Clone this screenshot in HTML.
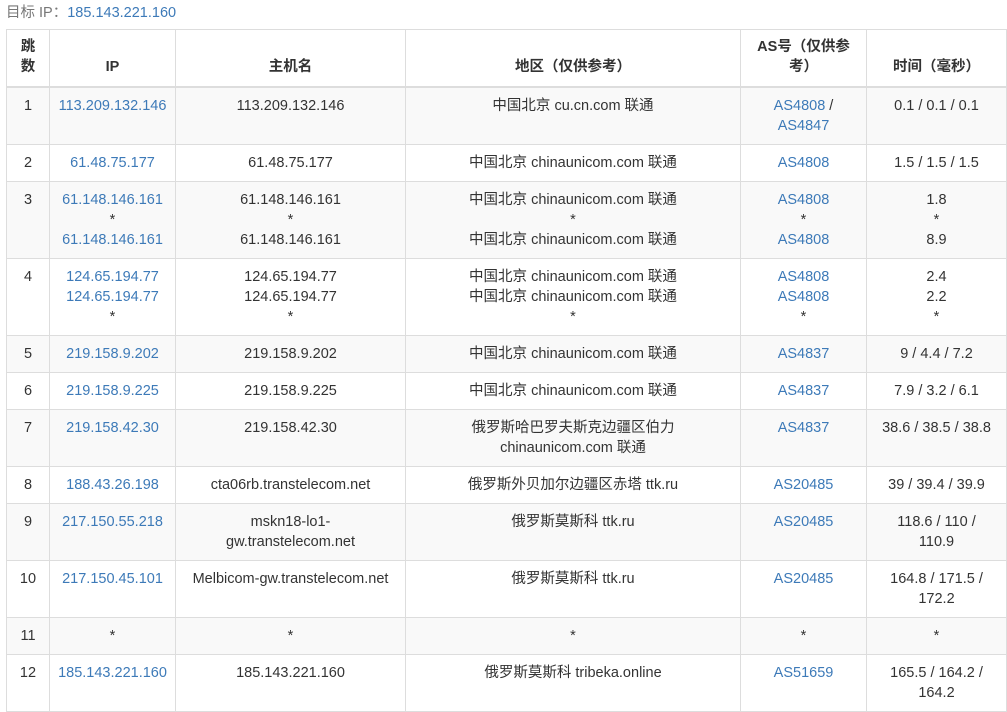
<!DOCTYPE html>
<html><head><meta charset="utf-8"><style>
body{margin:0;background:#fff;font-family:"Liberation Sans","Noto Sans CJK SC",sans-serif;font-size:14.5px;color:#333;}
.t{position:absolute;left:6px;top:3px;color:#777;line-height:20px}
.t span{color:#3d7ab8}
table{position:absolute;left:6px;top:29px;border-collapse:collapse;table-layout:fixed;width:1000px}
td,th{border:1px solid #ddd;text-align:center;vertical-align:top;padding:8px 4px;line-height:20px;box-sizing:border-box}
th{vertical-align:bottom;font-weight:bold;border-bottom:2px solid #ddd;padding-top:5px;padding-bottom:9px}
tr.g td{background:#f9f9f9}
a{color:#3d7ab8;text-decoration:none}
</style></head><body>
<div class="t">目标 IP：<span>185.143.221.160</span></div>
<table>
<colgroup><col style="width:43px"><col style="width:126px"><col style="width:230px"><col style="width:335px"><col style="width:126px"><col style="width:140px"></colgroup>
<tr style="height:57px"><th>跳<br>数</th><th>IP</th><th>主机名</th><th>地区（仅供参考）</th><th>AS号（仅供参<br>考）</th><th>时间（毫秒）</th></tr>
<tr class="g" style="height:56px"><td>1</td><td><a>113.209.132.146</a></td><td>113.209.132.146</td><td>中国北京 cu.cn.com 联通</td><td><a>AS4808</a> /<br><a>AS4847</a></td><td>0.1 / 0.1 / 0.1</td></tr>
<tr style="height:37px"><td>2</td><td><a>61.48.75.177</a></td><td>61.48.75.177</td><td>中国北京 chinaunicom.com 联通</td><td><a>AS4808</a></td><td>1.5 / 1.5 / 1.5</td></tr>
<tr class="g" style="height:77px"><td>3</td><td><a>61.148.146.161</a><br>*<br><a>61.148.146.161</a></td><td>61.148.146.161<br>*<br>61.148.146.161</td><td>中国北京 chinaunicom.com 联通<br>*<br>中国北京 chinaunicom.com 联通</td><td><a>AS4808</a><br>*<br><a>AS4808</a></td><td>1.8<br>*<br>8.9</td></tr>
<tr style="height:77px"><td>4</td><td><a>124.65.194.77</a><br><a>124.65.194.77</a><br>*</td><td>124.65.194.77<br>124.65.194.77<br>*</td><td>中国北京 chinaunicom.com 联通<br>中国北京 chinaunicom.com 联通<br>*</td><td><a>AS4808</a><br><a>AS4808</a><br>*</td><td>2.4<br>2.2<br>*</td></tr>
<tr class="g" style="height:37px"><td>5</td><td><a>219.158.9.202</a></td><td>219.158.9.202</td><td>中国北京 chinaunicom.com 联通</td><td><a>AS4837</a></td><td>9 / 4.4 / 7.2</td></tr>
<tr style="height:37px"><td>6</td><td><a>219.158.9.225</a></td><td>219.158.9.225</td><td>中国北京 chinaunicom.com 联通</td><td><a>AS4837</a></td><td>7.9 / 3.2 / 6.1</td></tr>
<tr class="g" style="height:57px"><td>7</td><td><a>219.158.42.30</a></td><td>219.158.42.30</td><td>俄罗斯哈巴罗夫斯克边疆区伯力<br>chinaunicom.com 联通</td><td><a>AS4837</a></td><td>38.6 / 38.5 / 38.8</td></tr>
<tr style="height:37px"><td>8</td><td><a>188.43.26.198</a></td><td>cta06rb.transtelecom.net</td><td>俄罗斯外贝加尔边疆区赤塔 ttk.ru</td><td><a>AS20485</a></td><td>39 / 39.4 / 39.9</td></tr>
<tr class="g" style="height:57px"><td>9</td><td><a>217.150.55.218</a></td><td>mskn18-lo1-<br>gw.transtelecom.net</td><td>俄罗斯莫斯科 ttk.ru</td><td><a>AS20485</a></td><td>118.6 / 110 /<br>110.9</td></tr>
<tr style="height:57px"><td>10</td><td><a>217.150.45.101</a></td><td>Melbicom-gw.transtelecom.net</td><td>俄罗斯莫斯科 ttk.ru</td><td><a>AS20485</a></td><td>164.8 / 171.5 /<br>172.2</td></tr>
<tr class="g" style="height:37px"><td>11</td><td>*</td><td>*</td><td>*</td><td>*</td><td>*</td></tr>
<tr style="height:57px"><td>12</td><td><a>185.143.221.160</a></td><td>185.143.221.160</td><td>俄罗斯莫斯科 tribeka.online</td><td><a>AS51659</a></td><td>165.5 / 164.2 /<br>164.2</td></tr>
</table>
</body></html>
